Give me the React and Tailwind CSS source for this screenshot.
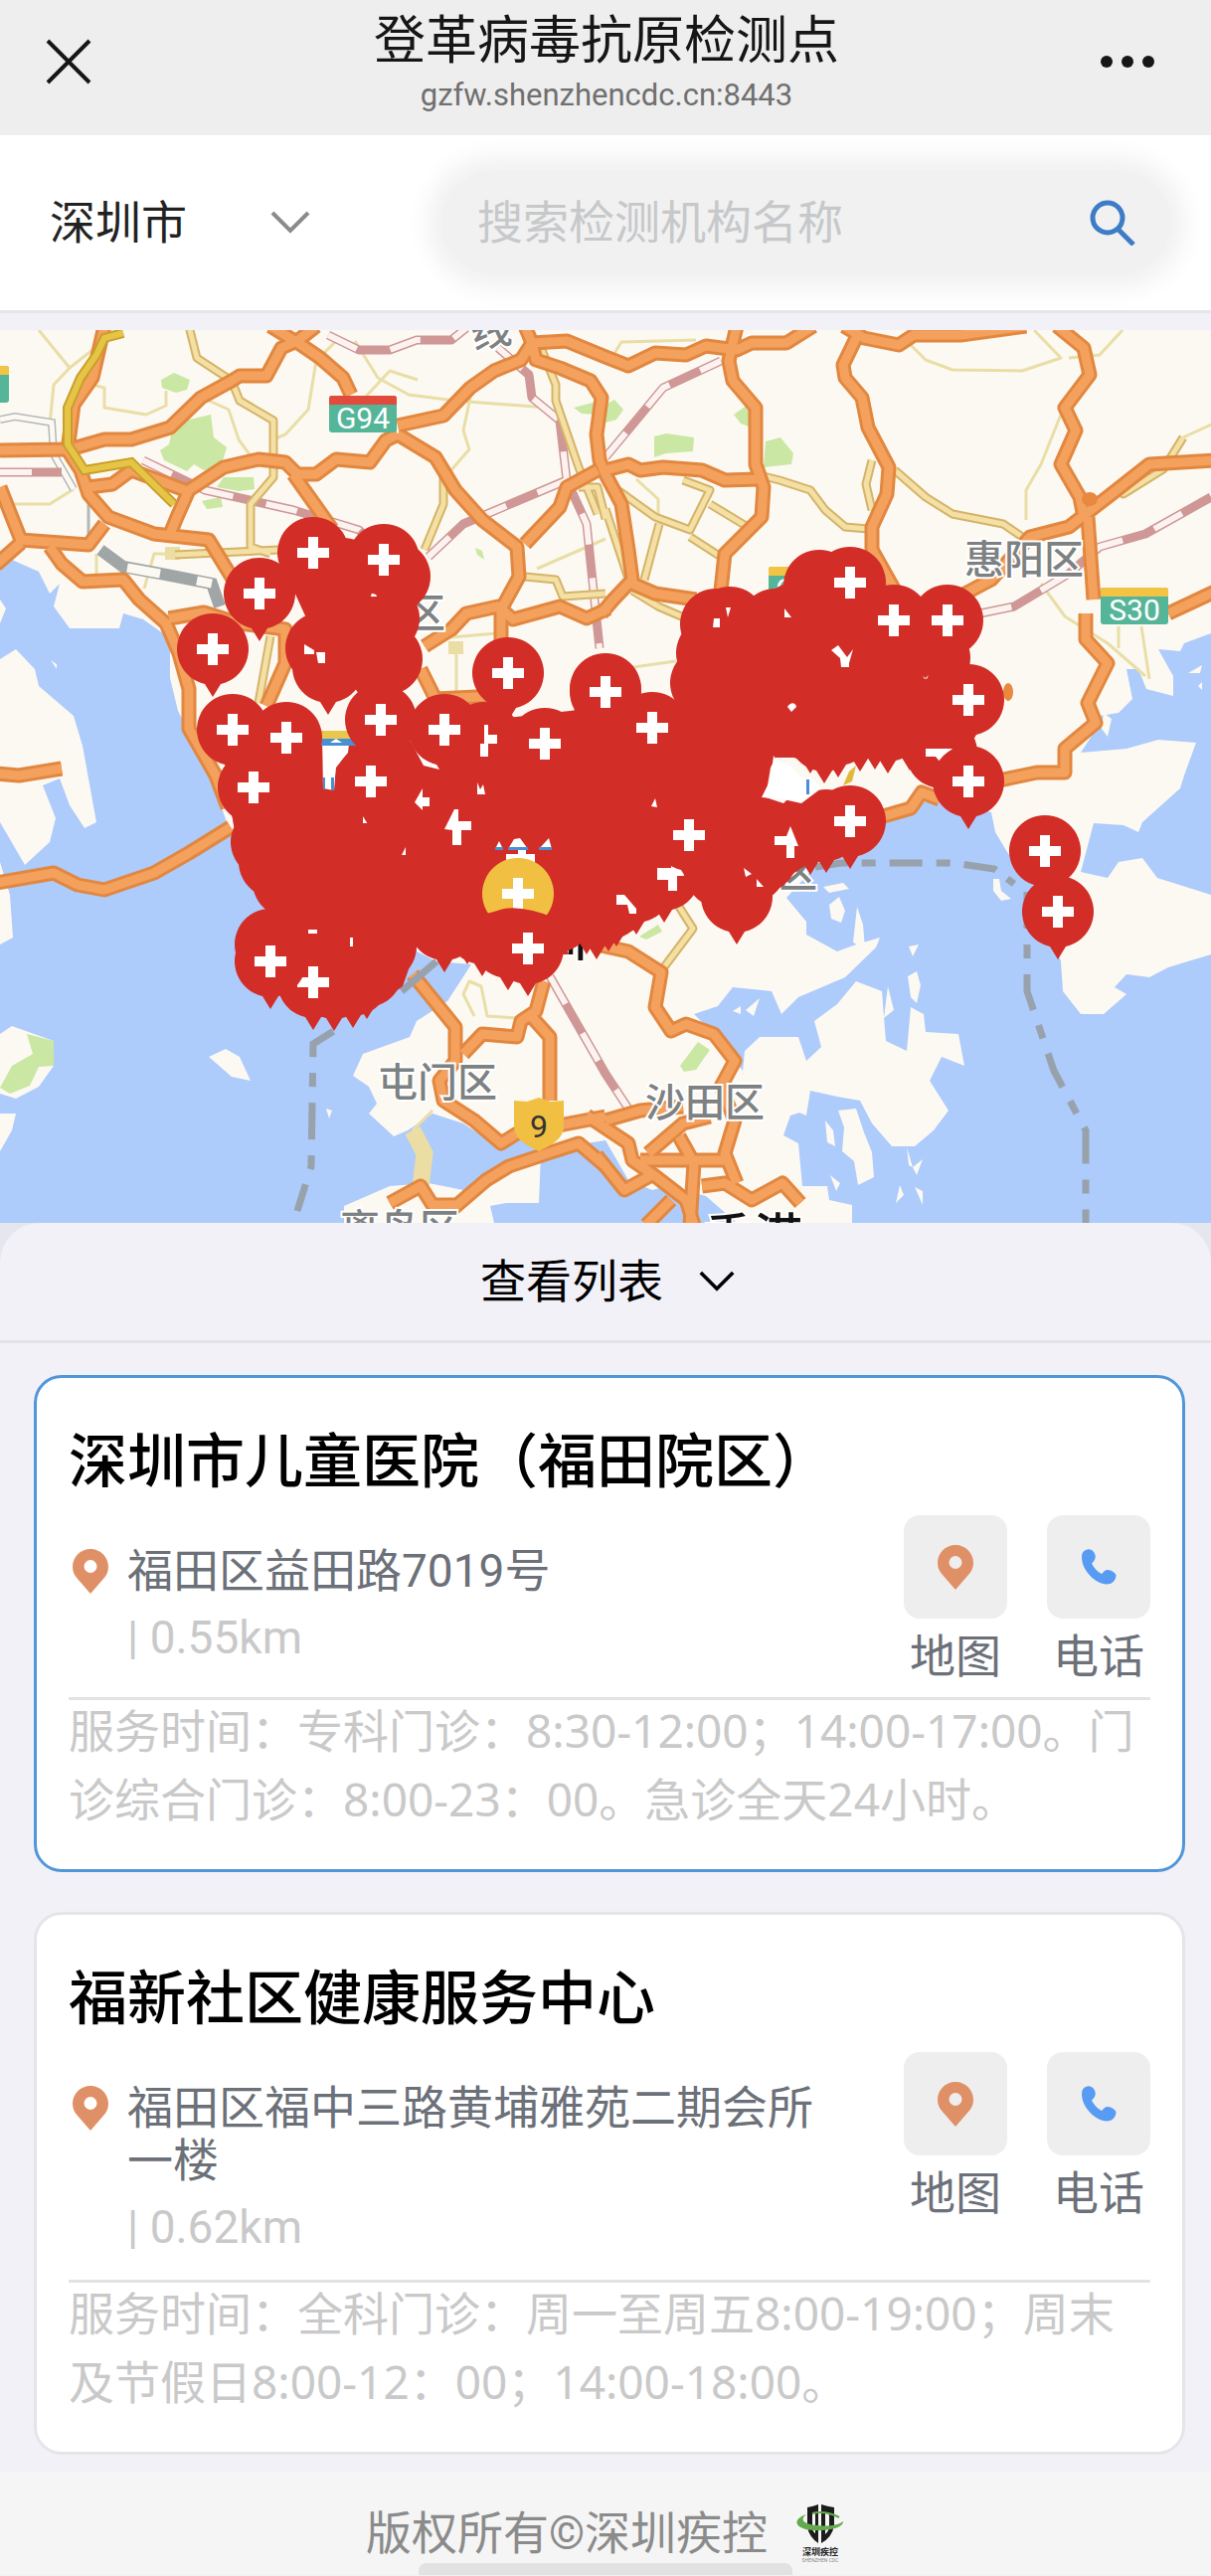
const places = [
  {
    id: 1,
    name: "深圳市儿童医院（福田院区）",
    address: "福田区益田路7019号",
    distance: "0.55km",
    hours: "专科门诊：8:30-12:00；14:00-17:00。门诊综合门诊：8:00-23：00。急诊全天24小时。",
  },
  {
    id: 2,
    name: "福新社区健康服务中心",
    address: "福田区福中三路黄埔雅苑二期会所一楼",
    distance: "0.62km",
    hours: "全科门诊：周一至周五8:00-19:00；周末及节假日8:00-12：00；14:00-18:00。",
  },
];

const motorways = [
  "0,121 70,120 105,110 132,110 171,98 202,68 233,51 241,46 268,46 283,18 299,11 318,-4",
  "272,-4 303,15 322,28 345,48 353,65",
  "400,96 446,86 473,58 497,41 524,30 535,13 570,11 609,27 632,36 659,23 690,25 710,16 741,20 756,13 791,13 818,-4",
  "528,-4 535,13 539,30 563,38 594,51 605,68 600,105 603,131 609,145 625,175 632,221 636,251 617,271 605,285",
  "400,105 388,111 372,133 338,130 318,145 299,145 287,133 260,130 225,138 190,161 178,188 171,205",
  "295,145 334,200",
  "400,105 438,128 458,161 485,191 520,218 522,248 504,281 504,320",
  "528,215 563,178 570,158 601,141",
  "105,-4 93,48 74,75 68,121 81,141 89,165 109,188 155,205 210,211 240,260",
  "0,158 21,211 89,216 105,195",
  "-4,236 21,214",
  "50,218 62,235 83,253 124,251 140,271 167,295 180,325 190,361 190,401 217,448 229,480",
  "89,158 113,155 132,141 186,161",
  "427,318 454,301 469,285 501,278 516,291 563,278 590,290 612,280",
  "423,341 438,371 500,368",
  "170,290 205,284 240,295 287,301 287,335 268,378",
  "741,-4 733,31 737,51 760,78 760,135 768,158 766,188 729,225 725,262",
  "609,141 632,135 644,141 667,138 706,141 729,151 764,150",
  "636,255 659,265 700,271",
  "849,-4 869,8 904,15 919,5 966,5 1032,-4",
  "861,8 848,35 850,48 867,68 873,98 894,138 892,165 877,198 877,221 900,262",
  "1063,-4 1090,18 1096,45 1071,78 1082,101 1067,135 1086,168 1090,188",
  "965,268 997,251 1036,208 1075,198 1114,168 1156,135 1222,131",
  "1094,188 1100,271",
  "1092,285 1092,311 1114,335 1094,375 1102,395 1071,421 1071,445 1043,445 1005,453",
  "1175,285 1222,263",
  "945,472 927,465 916,481 885,490",
  "-4,556 54,546 78,558 105,563 155,546 190,526 232,500",
  "-4,446 19,448 62,441",
  "415,648 458,701 458,735 442,755 446,775 477,795 504,818 520,808 609,791",
  "466,728 485,708 520,711 524,695 539,685 547,655",
  "535,691 553,711 553,775",
  "454,885 489,855 512,841 551,828 582,818 609,841",
  "392,878 423,861 435,880 458,880",
  "600,618 632,625 665,646 659,681 675,705 690,698 718,708 739,735 725,761 739,795 729,828 741,858",
  "609,795 644,785 687,781",
  "590,790 632,818 636,835 659,851 690,875 698,900",
  "644,835 729,835",
  "652,828 687,798 714,791",
  "683,811 698,838 694,900",
  "600,830 628,865 659,848",
  "650,900 675,875",
  "706,861 729,858 756,875 787,858 805,878",
];

const mainRoads = [
  "190,-4 198,28 233,51 241,71 275,91 275,148 252,175 252,218 272,225",
  "543,15 559,55 559,71 582,138 601,185",
  "446,145 446,175 427,221",
  "528,248 559,251 566,268 609,265",
  "176,226 280,221",
  "272,308 260,375",
  "764,146 784,151 815,161 830,181 850,198 873,200",
  "900,141 931,168 958,185 1009,195 1028,208",
  "617,158 659,188 694,201 714,161 687,151",
  "714,175 752,198",
  "694,208 725,228",
  "663,195 648,251",
  "877,131 871,155 877,181",
  "609,180 632,250",
  "636,262 662,278 690,290",
  "1120,158 1130,165 1170,140 1190,108",
  "683,580 697,602 667,642",
  "582,158 601,158 609,190",
];

const lanes = [
  "39,0 70,38 54,55 50,95 58,130 74,160",
  "93,20 70,38",
  "93,55 105,58 105,78 147,85 167,76 167,61",
  "341,8 318,31 310,80 287,105 275,110",
  "357,11 380,48 411,65 458,71 551,78",
  "365,70 392,41 420,50",
  "473,68 466,101 472,120 446,150",
  "208,70 230,80 240,110 258,135",
  "0,175 50,175 74,160",
  "97,225 97,250",
  "145,260 155,225 200,225",
  "916,15 931,30 958,40 1028,41 1067,28 1040,0",
  "1129,0 1106,25 1075,28",
  "1067,85 1047,135 1032,161 1032,191",
  "1047,255 1071,288 1114,315 1152,348",
  "1148,298 1156,351",
  "1125,298 1125,320",
  "1190,108 1218,95",
  "617,25 625,12 700,10",
  "640,150 662,170 662,195",
  "430,311 500,305 510,330",
  "459,320 459,370",
  "630,340 680,333",
  "540,240 609,210",
  "477,690 466,668 472,655 484,660 490,690 520,692",
  "435,785 415,805",
];

const railways = [
  "0,143 62,143",
  "144,131 206,161 295,181 361,201 390,230",
  "330,5 361,20 392,20 419,10 454,10 469,-2",
  "501,18 532,45 535,68 563,91 570,151 590,195 603,320",
  "570,151 466,195 431,228",
  "609,128 667,58 725,31",
  "986,285 1020,278 1075,245 1106,218 1152,205 1218,168",
  "553,650 609,748 632,783",
];

const greens = [
  "162,50 175,43 191,50 188,60 177,63 163,58",
  "186,91 212,85 215,108 228,118 222,138 205,141 195,135 188,142 165,131 161,121 170,115 173,100",
  "225,148 255,148 256,160 240,162 218,158",
  "203,172 222,168 224,178 208,180",
  "577,78 600,72 600,85 585,84",
  "609,75 618,70 627,80 620,90 609,93",
  "658,107 670,104 698,108 697,122 670,124 658,128",
  "738,85 752,75 756,98 745,94",
  "770,112 785,108 798,124 796,135 768,138",
  "684,740 702,716 714,724 700,744 688,746",
  "478,219 485,222 487,231 480,226",
  "643,610 662,598 666,605 650,613",
];

// pins that sit below the others, only their red bodies stay visible
const buriedPins = [
  [397, 248], [345, 245], [360, 280], [386, 290], [323, 320], [365, 325], [389, 331], [330, 339],
  [824, 257], [734, 294], [720, 296], [716, 325], [710, 355], [760, 306], [780, 296], [800, 290],
  [920, 310], [940, 330], [935, 372], [947, 425], [915, 395], [893, 398], [880, 394],
  [865, 396], [843, 402], [829, 408], [815, 398], [735, 410], [740, 430],
  [487, 410], [584, 420], [609, 361], [609, 400], [288, 438], [268, 480], [270, 490],
  [268, 515], [276, 535], [290, 555], [272, 618], [336, 657], [355, 654], [369, 645],
  [383, 620], [400, 580], [447, 598], [470, 590], [485, 602], [511, 616], [560, 590],
  [590, 580], [600, 585], [612, 577], [620, 572], [640, 560], [668, 548], [741, 570],
  [725, 545], [755, 540], [766, 530], [780, 515], [831, 498], [815, 500],
  [710, 500], [720, 470], [560, 500],
];

const pins = [
  [315, 224], [386, 231], [261, 265], [214, 321], [511, 345], [447, 402], [548, 416],
  [609, 364], [656, 400], [234, 402], [288, 410], [383, 392], [255, 460], [373, 454],
  [855, 254], [899, 292], [953, 292], [974, 372], [974, 454], [855, 494], [1051, 524],
  [1064, 585], [693, 508], [315, 656], [272, 635],
];

const halfCrosses = [
  "M487 397h4v10h9v9h-9v13h-8v-13h4z",
  "M417 475l8-14v9h7v9h-7v4z",
  "M447 502l10-20h4v12h13v9h-10v15h-9v-15z",
  "M480 455l3 7 3-5 2 10h-8z",
  "M661 541h14v-5h9l4 9v4h-7v15h-9v-11h-11z",
  "M620 568h8l12 14v5h-7l-2-9h-11z",
  "M779 509h12l4-10 8 20h-4v12h-8v-13h-12z",
  "M718 290h6v9h-7z",
  "M730 279h5l-3 10z",
  "M789 280l7 9h-7z",
  "M836 322l7-5 9 12 6-8-4 14v4h-8l-1-9z",
  "M792 379c3-5 8-5 9 0l-5 5z",
  "M931 421h27l-12 14-5-6h-10z",
  "M928 348l2 3 4-4-2 4z",
  "M306 316l10 6v4h-10z",
  "M318 324h9v11h-7z",
  "M374 264h5v4h-6z",
  "M310 603h9v4h-9z",
  "M352 611h3v9h-3z",
  "M748 541l8 6-6 3z",
  "M761 552l7 8h-7z",
  "M655 479l4-8 2 9z",
  "M404 528l4-8v8z",
  "M365 488l6 8h-6z",
];

const MapPin = ({ x, y, color = "#d22d27", cross = true }) => (
  <g transform={`translate(${x} ${y})`}>
    <path d="M0 48 L-8 35 A36 36 0 1 1 8 35 Z" fill={color} />
    {cross && <path d="M-5-16H5V-5H16V5H5V16H-5V5H-16V-5H-5Z" fill="#fff" />}
  </g>
);

const RoadBadge = ({ x, y, label, top }) => (
  <g transform={`translate(${x} ${y})`}>
    <rect width="68" height="37" rx="3" fill="#55b598" />
    <path d="M0 3a3 3 0 0 1 3-3h62a3 3 0 0 1 3 3v6H0Z" fill={top} />
    {label && (
      <text x="34" y="33" textAnchor="middle" fontSize="30" fill="#fff">
        {label}
      </text>
    )}
  </g>
);

const Lines = ({ items, ...rest }) => (
  <g fill="none" strokeLinejoin="round" {...rest}>
    {items.map((points) => (
      <polyline key={points} points={points} />
    ))}
  </g>
);

const CityMap = () => (
  <svg
    viewBox="0 0 1218 898"
    role="img"
    aria-label="检测点地图"
    className="block w-full h-auto font-['Roboto','Noto_Sans_CJK_SC',sans-serif]"
  >
    <rect width="1218" height="898" fill="#fcf9f2" />

    {/* Sea */}
    <g fill="#adcbfb">
      <path d="M0 238L12 231 39 243 50 265 60 255 54 278 70 300 120 300 124 285 144 291 171 310 171 350 179 383 212 448 229 498 268 581 420 560 419 625 439 635 474 638 450 675 419 695 412 711 365 728 355 750 371 761 379 778 371 788 396 811 410 805 435 788 466 798 501 821 520 811 544 825 609 815 632 855 656 865 671 861 710 871 741 898H0Z" />
      <path d="M791 571L824 535 857 528 892 491 939 471 997 485 1001 505 1013 525 1040 560 1067 635 1069 665 1087 688 1110 688 1133 668 1121 661 1133 648 1156 651 1175 641 1218 628V898H857V880L834 875 832 861 807 861 803 818 788 810 795 790 811 785V771L750 760 747 745 725 715 698 688 722 680 737 661 776 665 786 688 803 671 850 651 881 621 885 611 861 618 842 625 811 608V595Z" />
      <path d="M1218 305L1191 315 1187 323 1165 321 1180 348V368L1153 361 1145 341 1133 341 1139 371 1125 385 1106 388 1100 405 1087 425 1133 421 1165 412 1203 415 1191 448 1187 461 1149 495 1145 505 1130 498 1100 496 1087 545 1114 551 1125 535 1149 531 1164 551 1218 568Z" />
    </g>

    {/* Islands and peninsulas */}
    <g fill="#fcf9f2">
      <path d="M0 331L16 321 35 341 39 358 74 388 83 418 97 495 85 501 70 478 60 451 43 458 56 491 50 515 25 538 0 495Z" />
      <path d="M0 535L10 568 13 611 0 618ZM0 271L6 280 0 295Z" />
      <path d="M210 731L227 723 241 731 252 755 233 751ZM51 332l6 4v5z" />
      <path d="M0 708L12 700 54 715V740L39 761 16 773 0 768ZM0 788H16L12 805 0 826Z" />
      <path d="M346 881L392 861 431 858 466 865 501 851 516 841 544 828 542 878H509L493 881 497 898H346Z" />
      <path d="M747 745L749 725 764 711 803 711 811 735 826 721 819 695 842 678 861 655 887 665 889 691 891 715 912 725 916 681 929 688 931 706 964 708 970 740 947 731 935 755 954 785 939 805 920 821 897 821 877 798 865 775 842 771 815 765 811 790 750 765Z" />
      <path d="M843 785l18-2 8 24 8 20 2 25-16 8-4-24-12-10 2-24zM830 795l8 10 2 16-8-4zM835 850l10 8-4 8z" />
      <path d="M913 650l9-5 4 14-4 18-6-6zM914 620l10-2-6 12zM893 660l6 24-10 8zM912 822l6 20-4-2zM918 842l10-8-6 16zM905 860l4 10-8 8zM920 862l8 4v14z" />
      <path d="M834 578l10-8 6 14-4 12-10-4zM862 580l6 18 2 24-12-6zM828 560l20-4 6 6-20 4zM999 552l6 0 2 12 10 8-10 2-8-10z" />
      <path d="M737 685l8-5 0 8zM750 684l14-12-6 18zM328 783l6 2-3 8z" />
      <path d="M1195 345l14-8-2 8zM1205 358l4-4v8zM1110 385l8 6-4 18-6-8z" />
    </g>

    <g fill="#cae7a4">
      {greens.map((points) => (
        <polygon key={points} points={points} />
      ))}
      <path d="M27 708L54 715V740L39 741 30 760 10 768 0 762 12 740 33 728Z" />
    </g>

    {/* Roads and railways */}
    <path d="M415 805L427 828 423 862" fill="none" stroke="#ebdda4" strokeWidth="17" />
    <rect x="166" y="218" width="15" height="13" fill="#ebdda4" />
    <rect x="451" y="313" width="15" height="13" fill="#ebdda4" />
    <Lines items={lanes} stroke="#e9dea6" strokeWidth="3" />
    <path d="M0 90L15 87 52 93 54 125 74 160" fill="none" stroke="#b4b8b8" strokeWidth="8" />
    <path d="M0 90L15 87 52 93 54 125 74 160" fill="none" stroke="#fcf9f2" strokeWidth="5" />
    <path d="M89 165V215" fill="none" stroke="#b4b8b8" strokeWidth="3" />
    <path d="M101 221L124 238 167 246 213 255 221 278" fill="none" stroke="#a0a5a6" strokeWidth="12" />
    <path d="M128 239L161 245M198 252L213 255" fill="none" stroke="#fcf9f2" strokeWidth="9" />
    <Lines items={railways} stroke="#cf9796" strokeWidth="9" />
    <Lines items={railways} stroke="#fcf3f0" strokeWidth="6" strokeDasharray="32 34" />
    <Lines items={mainRoads} stroke="#d5b468" strokeWidth="9" />
    <Lines items={mainRoads} stroke="#f4dfa4" strokeWidth="5" />
    <Lines items={motorways} stroke="#e2873f" strokeWidth="15" />
    <Lines items={motorways} stroke="#f4a15e" strokeWidth="9" />
    <path d="M124 3L105 8 97 25 81 48 68 78V115L85 141 132 133 175 175" fill="none" stroke="#c99f2b" strokeWidth="10" />
    <path d="M124 3L105 8 97 25 81 48 68 78V115L85 141 132 133 175 175" fill="none" stroke="#e6c546" strokeWidth="6" />
    <ellipse cx="1014" cy="364" rx="5" ry="9" fill="#e8893f" />
    <ellipse cx="1096" cy="170" rx="8" ry="7" fill="#e8893f" />

    {/* City border */}
    <g fill="none" stroke="#98a2ac" strokeWidth="7">
      <path d="M820 540L846 536 960 536 1000 542 1020 557" strokeDasharray="33 14 14 14" />
      <path d="M1033 565V665L1060 745 1092 805V898" strokeDasharray="37 16 14 16" />
      <path d="M342 701L315 718 313 841 299 886" strokeDasharray="37 16 14 16" strokeDashoffset="-8" />
      <path d="M439 635L404 665" />
    </g>

    {/* Labels */}
    <g fontSize="40" fontWeight="500" fill="#7d8182" stroke="#fff" strokeWidth="4" paintOrder="stroke">
      <text x="970" y="245">惠阳区</text>
      <text x="380" y="771">屯门区</text>
      <text x="649" y="791">沙田区</text>
      <text x="342" y="918">离岛区</text>
      <text x="408" y="299">区</text>
      <text x="702" y="560">盐田区</text>
      <text x="474" y="16" transform="rotate(-12 494 4)">线</text>
    </g>
    <g fontSize="50" fontWeight="500" fill="#111" stroke="#fff" strokeWidth="4" paintOrder="stroke">
      <text x="490" y="630">深圳</text>
      <text x="708" y="930">香港</text>
    </g>
    <RoadBadge x={331} y={66} label="G94" top="#e04b3c" />
    <RoadBadge x={1107} y={259} label="S30" top="#f3c443" />
    <RoadBadge x={-59} y={36} top="#f3c443" />
    <RoadBadge x={773} y={238} label="G25" top="#f3c443" />
    <path d="M517 775L530 776 542 772 554 776 567 775V800C567 815 553 820 542 826 531 820 517 815 517 800Z" fill="#f1bf42" />
    <text x="542" y="812" textAnchor="middle" fontSize="32" fill="#333">9</text>

    {/* Test sites */}
    <path
      d="M290 250L400 240 405 330 340 360ZM700 300L775 280 805 240 870 260 980 290 960 340 990 380 975 415 930 430 840 430 780 430 775 440 770 470 830 490 840 520 800 545 741 600 700 560 610 615 560 615 530 640 470 625 440 615 419 620 405 660 375 682 310 690 250 640 268 581 240 520 232 450 240 420 320 410 420 400 600 380 640 390 680 380Z"
      fill="#d22d27"
    />
    {buriedPins.map(([x, y]) => (
      <MapPin key={`${x}-${y}`} x={x} y={y} cross={false} />
    ))}
    <path d="M324 408L352 408 350 425 338 440 336 463 325 461Z" fill="#fff" />
    <path d="M322 403H358V411H322Z" fill="#e9c64c" />
    <path d="M322 411H358V418H322Z" fill="#4a8fd3" />
    <path d="M332 415l6-4 6 4z" fill="#fff" />
    <path d="M325 450h2v12h-2zM333 450h3v13h-3z" fill="#4a8fd3" />
    <path d="M411 410L423 428 441 436 442 442 426 438Z" fill="#fff" />
    <path d="M778 428L782 434 794 437 804 448 812 452 815 449 826 461 806 476 788 472 766 470 775 452Z" fill="#fff" />
    <path d="M811 452H814V467H811Z" fill="#4a8fd3" />
    <path d="M848 458L854 444 861 438 857 454Z" fill="#e0b93c" />
    <path d="M498 522l4-8 4 8zM511 522l6-10 6-1 8 11zM542 522l10-11 3 11z" fill="#fff" />
    <path d="M498 520h8v3h-8zM511 520h20v3h-20zM542 520h13v3h-13z" fill="#4a8fd3" />
    <path d="M509 527h12v-4h8v4h9v8h-29z" fill="#fff" />
    {halfCrosses.map((d) => (
      <path key={d} d={d} fill="#fff" />
    ))}
    {pins.map(([x, y]) => (
      <MapPin key={`${x}-${y}`} x={x} y={y} />
    ))}
    <MapPin x={521} y={567} color="#f1bf42" />
    <path d="M480 590Q492 586 500 584 520 576 560 592L572 628H480Z" fill="#d22d27" />
    <MapPin x={531} y={622} />
  </svg>
);

const LocationIcon = () => (
  <svg viewBox="0 0 36 45" className="h-[45px] w-9 shrink-0" aria-hidden="true">
    <path
      d="M18 0C8 0 0 8 0 18c0 5 2 9 5 12L18 45 31 30c3-3 5-7 5-12C36 8 28 0 18 0Zm0 24a6.500 6.500 0 1 1 0-13 6.500 6.500 0 0 1 0 13Z"
      fill="#e09066"
    />
  </svg>
);

const PhoneIcon = () => (
  <svg viewBox="0 0 35 36" className="h-9 w-[35px]" aria-hidden="true">
    <path
      d="M4 1C8-1 12 1 13.500 6 14.500 10 12 13 10 14.500 12 19 16 23 20 25 22 23.500 23 21 26 21 30 21 35 25 34.500 27 34 32 30 35.500 25 35.500 14 35 0 22 0 8 0 4 1.500 2 4 1Z"
      fill="#579bf3"
    />
  </svg>
);

const Chevron = ({ className }) => (
  <svg viewBox="0 0 40 24" className={className} fill="none" stroke="currentColor" strokeWidth="4" aria-hidden="true">
    <path d="M2 2l18 18L38 2" />
  </svg>
);

const CdcLogo = () => (
  <svg viewBox="0 0 50 60" className="h-15 w-[50px]" role="img" aria-label="深圳疾控">
    <path d="M12 4Q18 3 23 1V40Q14 34 12 24Z" fill="#1c1c1c" />
    <path d="M26 1Q32 3 39 4V22Q37 34 26 40Z" fill="#1c1c1c" />
    <path d="M17 9H20V30Q17 28 17 24ZM30 9Q34 9 34 13V22Q34 28 30 31Z" fill="#f5f5f5" />
    <path d="M11 11C-4 16-1 26 18 27 34 28 49 24 48 18 42 23 30 23 22 22 8 21 4 16 11 11Z" fill="#62aa4c" />
    <path d="M17 10Q30 7 44 14" fill="none" stroke="#62aa4c" strokeWidth="2" />
    <text x="25" y="52" textAnchor="middle" fontSize="9" fontWeight="700" fill="#222">深圳疾控</text>
    <text x="25" y="59" textAnchor="middle" fontSize="5" fill="#888">SHENZHEN CDC</text>
  </svg>
);

const ActionButton = ({ label, children }) => (
  <button className="flex flex-col items-center gap-3">
    <span className="flex size-[104px] items-center justify-center rounded-2xl bg-[#eeeeee]">{children}</span>
    <span className="leading-[53px] text-[#6b7079]">{label}</span>
  </button>
);

const PlaceCard = ({ place, active }) => (
  <article
    className={`rounded-[28px] border-3 bg-white px-8 pt-12 pb-9 text-[46px] ${
      active ? "border-[#5296da]" : "border-[#e5e5e9]"
    }`}
  >
    <h2 className="text-[59px] leading-[74px] font-medium text-black">{place.name}</h2>
    <div className="mt-4 flex items-start justify-between border-b-3 border-[#e3e3e3]">
      <div className="flex pt-[30px] pb-[26px]">
        <div className="flex h-[53px] w-[59px] shrink-0 items-center pl-1">
          <LocationIcon />
        </div>
        <div className="max-w-[700px] leading-[53px]">
          <p className="text-[#6b7079]">{place.address}</p>
          <p className="mt-[14px] text-[#c9c9c9]">| {place.distance}</p>
        </div>
      </div>
      <div className="flex shrink-0 gap-10 pb-[14px]">
        <ActionButton label="地图">
          <LocationIcon />
        </ActionButton>
        <ActionButton label="电话">
          <PhoneIcon />
        </ActionButton>
      </div>
    </div>
    <p className="-mt-1 font-['Noto_Sans','Noto_Sans_CJK_SC',sans-serif] leading-[69px] text-[#c9c9c9]">
      {`服务时间：${place.hours}`}
    </p>
  </article>
);

export default function App() {
  return (
    <div className="relative min-h-screen bg-[#f2f1f8] font-['Roboto','Noto_Sans_CJK_SC',sans-serif]">
      {/* Title bar */}
      <header className="grid h-[136px] grid-cols-[1fr_auto_1fr] items-center bg-[#eeeeee] pr-11 pb-1.5 pl-[46px]">
        <button aria-label="关闭" className="mb-1.5 justify-self-start">
          <svg viewBox="0 0 46 46" className="size-[46px]" fill="none" stroke="#161616" strokeWidth="4">
            <path d="M2 2l42 42M44 2L2 44" />
          </svg>
        </button>
        <div className="text-center">
          <h1 className="text-[52px] leading-[62px] text-[#161616]">登革病毒抗原检测点</h1>
          <p className="text-[31px] leading-[46px] text-[#707070]">gzfw.shenzhencdc.cn:8443</p>
        </div>
        <button aria-label="更多" className="mb-1.5 justify-self-end pr-3">
          <svg viewBox="0 0 56 12" className="h-3 w-14" fill="#161616">
            <circle cx="7" cy="6" r="6" />
            <circle cx="28" cy="6" r="6" />
            <circle cx="49" cy="6" r="6" />
          </svg>
        </button>
      </header>

      {/* Search */}
      <form className="flex items-center gap-[132px] border-b-3 border-[#e5e5ea] bg-white py-9 pr-10 pl-[50px] text-[46px]">
        <div className="relative flex items-center">
          <select aria-label="城市" className="w-[262px] appearance-none bg-transparent text-[#222222] outline-none">
            <option>深圳市</option>
          </select>
          <Chevron className="pointer-events-none absolute right-0 h-6 w-10 text-[#8b8b8b]" />
        </div>
        <div className="flex h-[104px] min-w-0 flex-1 items-center rounded-full bg-[#f1f1f1] px-9 shadow-[0_0_24px_14px_#f1f1f1]">
          <input
            type="text"
            aria-label="搜索检测机构名称"
            placeholder="搜索检测机构名称"
            className="min-w-0 flex-1 bg-transparent outline-none placeholder:text-[#c6c8ca]"
          />
          <button type="button" aria-label="搜索">
            <svg viewBox="0 0 46 46" className="size-[46px]" fill="none" stroke="#3d7cc6" strokeWidth="5">
              <circle cx="18" cy="18" r="15" />
              <path d="M28 29l16 16" />
            </svg>
          </button>
        </div>
      </form>

      <div className="mt-[17px] bg-[#e6e7ee]">
        <CityMap />
      </div>

      {/* List of places */}
      <main>
        <div className="bg-[#e6e7ee]">
          <button className="flex h-[121px] w-full items-center justify-center gap-9 rounded-t-[40px] border-b-3 border-[#e3e3e8] bg-[#f2f1f8] pl-1 text-[46px] text-black">
            查看列表
            <Chevron className="h-[22px] w-9" />
          </button>
        </div>
        <div className="flex flex-col gap-10 pt-8 pr-[26px] pb-[17px] pl-[34px]">
          {places.map((place, index) => (
            <PlaceCard key={place.id} place={place} active={index === 0} />
          ))}
        </div>
      </main>

      <footer className="relative flex items-start justify-center gap-7 bg-[#f5f5f5] pt-8 pb-3 text-[46px] text-[#8b8b8b]">
        <span className="leading-[60px]">版权所有©深圳疾控</span>
        <CdcLogo />
        <div className="absolute inset-x-0 bottom-0 mx-auto h-3 w-[376px] rounded-t-lg bg-[#e2e2e2]"></div>
      </footer>
    </div>
  );
}
